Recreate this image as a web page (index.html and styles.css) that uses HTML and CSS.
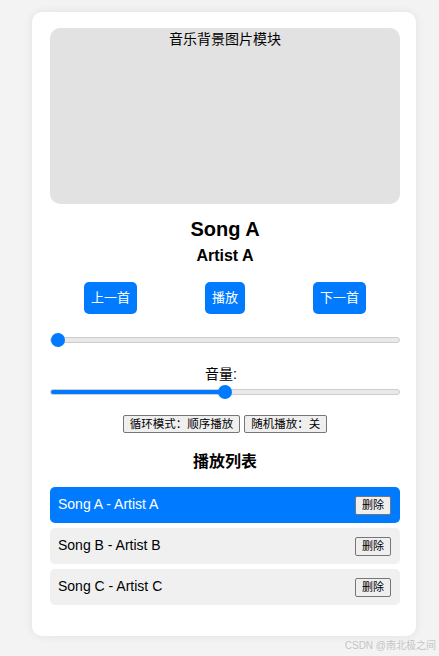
FILE: index.html
```html
<!DOCTYPE html>
<html lang="zh">
<head>
<meta charset="utf-8">
<title>音乐播放器</title>
<link rel="stylesheet" href="styles.css">
</head>
<body>
<div class="card">
  <div class="cover">音乐背景图片模块</div>
  <h2 class="title">Song A</h2>
  <h3 class="artist">Artist A</h3>
  <div class="controls">
    <button class="ctrl">上一首</button>
    <button class="ctrl">播放</button>
    <button class="ctrl">下一首</button>
  </div>
  <input class="range progress" type="range" min="0" max="100" value="0" style="--fill:0%">
  <div class="vol-label">音量:</div>
  <input class="range volume" type="range" min="0" max="100" value="50" style="--fill:50%">
  <div class="modes">
    <button class="plain">循环模式：顺序播放</button>
    <button class="plain">随机播放：关</button>
  </div>
  <h3 class="list-title">播放列表</h3>
  <ul class="playlist">
    <li class="item active"><span>Song A - Artist A</span><button class="plain del">删除</button></li>
    <li class="item"><span>Song B - Artist B</span><button class="plain del">删除</button></li>
    <li class="item"><span>Song C - Artist C</span><button class="plain del">删除</button></li>
  </ul>
</div>
<div class="watermark">CSDN @南北极之间</div>
</body>
</html>
```
FILE: styles.css
```css
* { box-sizing: border-box; }
html, body { margin: 0; padding: 0; }
body {
  background: #f3f3f3;
  font-family: "Liberation Sans", Arial, "Noto Sans CJK SC", sans-serif;
  color: #000;
  padding: 12px 0 20px 32px;
  min-height: 656px;
  position: relative;
}
.card {
  width: 384px;
  background: #fff;
  border-radius: 10px;
  box-shadow: 0 0 10px rgba(0,0,0,0.08);
  padding: 16px 16px 16px 18px;
}
.cover {
  height: 176px;
  background: #e2e2e2;
  border-radius: 10px;
  text-align: center;
  font-size: 14px;
  line-height: 20px;
  padding-top: 1px;
}
.title {
  margin: 13px 0 0;
  font-size: 20px;
  line-height: 24px;
  text-align: center;
  font-weight: bold;
}
.artist {
  margin: 5px 0 0;
  font-size: 16px;
  line-height: 20px;
  text-align: center;
  font-weight: bold;
}
.controls {
  display: flex;
  justify-content: space-around;
  margin-top: 16px;
}
.ctrl {
  background: #007bff;
  color: #fff;
  border: none;
  border-radius: 5px;
  height: 32px;
  padding: 0 7px;
  font-size: 13px;
  line-height: 32px;
  font-family: "Liberation Sans", "Noto Sans CJK SC", sans-serif;
}
.range {
  -webkit-appearance: none;
  appearance: none;
  display: block;
  width: 100%;
  height: 14px;
  margin: 0;
  background: transparent;
}
.range::-webkit-slider-runnable-track {
  height: 6px;
  border-radius: 3px;
  border: 1px solid #cdcdcd;
  background: linear-gradient(to right, #007bff var(--fill), #e9e9e9 var(--fill));
}
.range::-webkit-slider-thumb {
  -webkit-appearance: none;
  width: 14px;
  height: 14px;
  border-radius: 50%;
  background: #007bff;
  border: none;
  margin-top: -5px;
}
.progress { margin-top: 19px; }
.vol-label {
  margin-top: 17px;
  text-align: center;
  font-size: 14px;
  line-height: 20px;
  padding-right: 8px;
}
.volume { margin-top: 1px; }
.modes {
  display: flex;
  justify-content: center;
  gap: 4px;
  margin-top: 16px;
}
.plain {
  background: #efefef;
  border: 1px solid #767676;
  border-radius: 2px;
  padding: 1px 6px;
  font-size: 11.5px;
  line-height: 14px;
  color: #000;
  font-family: "Liberation Sans", "Noto Sans CJK SC", sans-serif;
}
.list-title {
  margin: 18px 0 0;
  font-size: 16px;
  line-height: 22px;
  text-align: center;
  font-weight: bold;
}
.playlist {
  list-style: none;
  margin: 14px 0 15px;
  padding: 0;
  display: flex;
  flex-direction: column;
  gap: 5px;
}
.item {
  height: 36px;
  display: flex;
  align-items: center;
  justify-content: space-between;
  padding: 0 9px 0 8px;
  background: #f0f0f0;
  border-radius: 5px;
  font-size: 14px;
}
.item span { position: relative; top: -1px; }
.item.active { background: #007bff; color: #fff; }
.del {
  font-size: 11px;
  line-height: 15px;
  padding: 1px 6px;
}
.watermark {
  position: absolute;
  right: 3px;
  bottom: 4px;
  font-size: 10px;
  color: #c4c4c4;
  font-family: "Liberation Sans", "Noto Sans CJK SC", sans-serif;
}
```
